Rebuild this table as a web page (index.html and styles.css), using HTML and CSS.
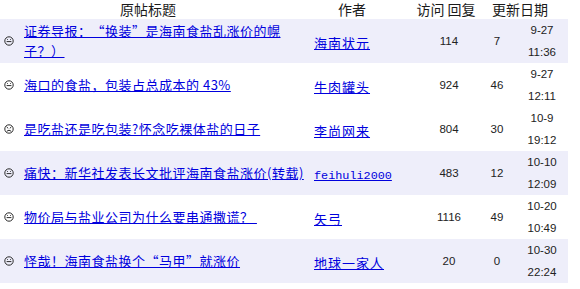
FILE: index.html
```html
<!DOCTYPE html>
<html lang="zh-CN">
<head>
<meta charset="utf-8">
<title>原帖列表</title>
<link rel="stylesheet" href="styles.css">
</head>
<body>
<div class="board">
  <div class="head">
    <span class="h-title">原帖标题</span>
    <span class="h-author">作者</span>
    <span class="h-stats">访问 回复</span>
    <span class="h-date">更新日期</span>
  </div>
  <table class="topics">
    <colgroup>
      <col class="c-title"><col class="c-author"><col class="c-visit"><col class="c-reply"><col class="c-date">
    </colgroup>
    <tr class="alt">
      <td class="title"><div class="cell"><svg class="face" viewBox="0 0 10 10"><circle cx="5" cy="5" r="4.2"/><line x1="2.6" y1="5.6" x2="7.4" y2="5.6"/><circle class="eye" cx="3.5" cy="3.4" r="0.5"/><circle class="eye" cx="6.5" cy="3.4" r="0.5"/></svg><a href="#">证券导报：“换装”是海南食盐乱涨价的幌子？）</a></div></td>
      <td class="author"><a href="#">海南状元</a></td>
      <td class="num">114</td>
      <td class="num">7</td>
      <td class="date">9-27<br>11:36</td>
    </tr>
    <tr>
      <td class="title"><div class="cell"><svg class="face" viewBox="0 0 10 10"><circle cx="5" cy="5" r="4.2"/><line x1="2.6" y1="5.6" x2="7.4" y2="5.6"/><circle class="eye" cx="3.5" cy="3.4" r="0.5"/><circle class="eye" cx="6.5" cy="3.4" r="0.5"/></svg><a href="#">海口的食盐，包装占总成本的 43%</a></div></td>
      <td class="author"><a href="#">牛肉罐头</a></td>
      <td class="num">924</td>
      <td class="num">46</td>
      <td class="date">9-27<br>12:11</td>
    </tr>
    <tr>
      <td class="title"><div class="cell"><svg class="face" viewBox="0 0 10 10"><circle cx="5" cy="5" r="4.2"/><path d="M2.9 7.2 Q5 5.2 7.1 7.2"/><line x1="2.7" y1="3" x2="4.2" y2="4.3"/><line x1="7.3" y1="3" x2="5.8" y2="4.3"/></svg><a href="#">是吃盐还是吃包装?怀念吃裸体盐的日子</a></div></td>
      <td class="author"><a href="#">李尚网来</a></td>
      <td class="num">804</td>
      <td class="num">30</td>
      <td class="date">10-9<br>19:12</td>
    </tr>
    <tr class="alt">
      <td class="title"><div class="cell"><svg class="face" viewBox="0 0 10 10"><circle cx="5" cy="5" r="4.2"/><line x1="2.6" y1="5.6" x2="7.4" y2="5.6"/><circle class="eye" cx="3.5" cy="3.4" r="0.5"/><circle class="eye" cx="6.5" cy="3.4" r="0.5"/></svg><a href="#">痛快：新华社发表长文批评海南食盐涨价(转载)</a></div></td>
      <td class="author"><a href="#" class="latin">feihuli2000</a></td>
      <td class="num">483</td>
      <td class="num">12</td>
      <td class="date">10-10<br>12:09</td>
    </tr>
    <tr>
      <td class="title"><div class="cell"><svg class="face" viewBox="0 0 10 10"><circle cx="5" cy="5" r="4.2"/><line x1="2.6" y1="5.6" x2="7.4" y2="5.6"/><circle class="eye" cx="3.5" cy="3.4" r="0.5"/><circle class="eye" cx="6.5" cy="3.4" r="0.5"/></svg><a href="#">物价局与盐业公司为什么要串通撒谎？&nbsp;</a></div></td>
      <td class="author"><a href="#">矢弓</a></td>
      <td class="num">1116</td>
      <td class="num">49</td>
      <td class="date">10-20<br>10:49</td>
    </tr>
    <tr class="alt">
      <td class="title"><div class="cell"><svg class="face" viewBox="0 0 10 10"><circle cx="5" cy="5" r="4.2"/><line x1="2.6" y1="5.6" x2="7.4" y2="5.6"/><circle class="eye" cx="3.5" cy="3.4" r="0.5"/><circle class="eye" cx="6.5" cy="3.4" r="0.5"/></svg><a href="#">怪哉！海南食盐换个“马甲”就涨价</a></div></td>
      <td class="author"><a href="#">地球一家人</a></td>
      <td class="num">20</td>
      <td class="num">0</td>
      <td class="date">10-30<br>22:24</td>
    </tr>
  </table>
</div>
</body>
</html>
```

FILE: styles.css
```css
html, body {
  margin: 0;
  padding: 0;
  background: #ffffff;
}

body {
  font-family: "Noto Sans CJK SC", "Noto Sans", sans-serif;
  color: #222222;
}

.board {
  width: 568px;
}

.head {
  display: flex;
  height: 19px;
  align-items: center;
  font-size: 14px;
  line-height: 19px;
  color: #1a1a1a;
}

.head span {
  text-align: center;
  white-space: nowrap;
}

.h-title { width: 296px; }
.h-author { width: 112px; }
.h-stats { width: 76px; }
.h-date { width: 72px; }

.topics {
  width: 568px;
  border-collapse: collapse;
  table-layout: fixed;
}

.c-title { width: 314px; }
.c-author { width: 106px; }
.c-visit { width: 58px; }
.c-reply { width: 38px; }
.c-date { width: 52px; }

.topics tr {
  height: 44px;
}

.topics tr.alt {
  background: #eeeefa;
}

.topics td {
  padding: 0;
  vertical-align: middle;
}

.topics a {
  color: #0000dd;
  text-decoration: underline;
  font-size: 13px;
  letter-spacing: 0.5px;
  text-spacing-trim: space-all;
}

.title .cell {
  display: flex;
  align-items: center;
  padding-left: 4px;
}

.title a {
  line-height: 20px;
}

.face {
  width: 10px;
  height: 10px;
  flex: none;
  margin-right: 10px;
  fill: none;
  stroke: #2a2a2a;
  stroke-width: 1;
}

.face .eye {
  fill: #2a2a2a;
  stroke: none;
}

.author {
  padding-left: 2px;
}

.author a {
  line-height: 22px;
  letter-spacing: 1px;
}

.author a.latin {
  font-family: "Liberation Mono", monospace;
  font-size: 11.8px;
  letter-spacing: 0;
}

.num, .date {
  font-family: "Liberation Sans", Arial, sans-serif;
  font-size: 11.5px;
  text-align: center;
  color: #222222;
}

.date {
  line-height: 22px;
}
```
